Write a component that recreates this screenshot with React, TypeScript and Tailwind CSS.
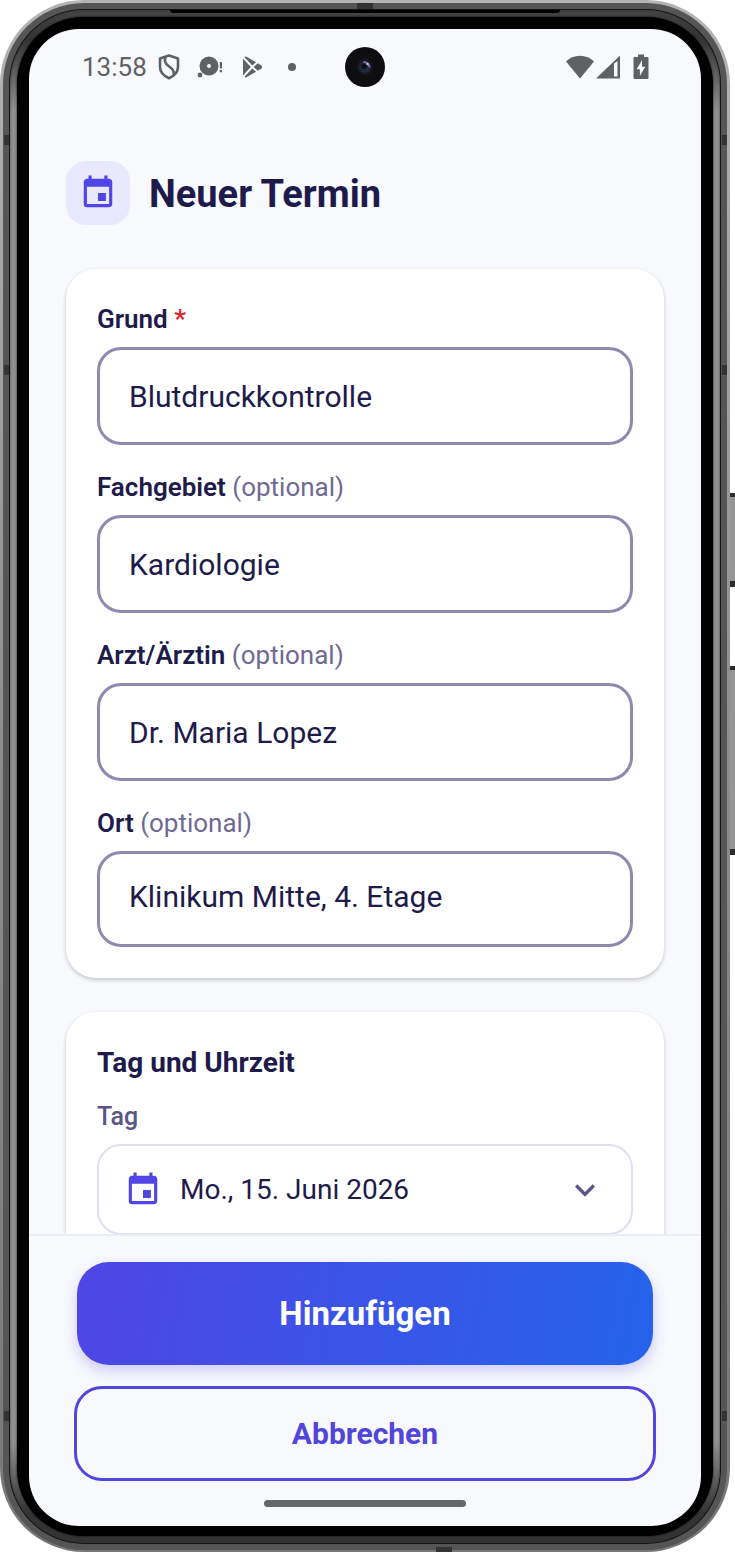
import { useState } from "react";
import { MdEvent, MdExpandMore } from "react-icons/md";

const initialFields = [
  { id: "reason", label: "Grund", required: true, value: "Blutdruckkontrolle" },
  { id: "specialty", label: "Fachgebiet", required: false, value: "Kardiologie" },
  { id: "doctor", label: "Arzt/Ärztin", required: false, value: "Dr. Maria Lopez" },
  { id: "place", label: "Ort", required: false, value: "Klinikum Mitte, 4. Etage" },
];

function StatusBar() {
  return (
    <div className="relative flex h-[76px] shrink-0 items-center justify-between pr-[52px] pl-[53px] text-[#5f6163]">
      <div className="flex items-center">
        <span className="text-[26px] leading-8">13:58</span>
        <svg className="ml-[11px] h-[26px] w-[22px]" viewBox="0 0 22 26" fill="none" stroke="currentColor" strokeWidth="2.6" strokeLinejoin="round">
          <path d="M11 1.6 20 4.6v8.2c0 5-3.6 9-9 11.4-5.4-2.400-9-6.400-9-11.400V4.600z" />
          <path d="M7.500 3.500c-1.500 3.500-.5 6 3 8.500s6 4.500 5 8.500" />
        </svg>
        <svg className="ml-[17px] h-[26px] w-[26px]" viewBox="0 0 26 26" fill="currentColor">
          <path fillRule="evenodd" d="M12 2.500a9.500 9.500 0 1 0 0 19 9.500 9.500 0 0 0 0-19zm0 7.500a2 2 0 1 1 0 4 2 2 0 0 1 0-4z" />
          <circle cx="3" cy="21" r="2.400" />
          <path d="M22.800 8h2.200v6.500h-2.200zM22.800 16h2.200v2.200h-2.200z" />
        </svg>
        <svg className="ml-[19px] h-[24px] w-[21px]" viewBox="0 0 21 24" fill="currentColor">
          <path d="M1 3.500 8.800 12 1 20.500z" />
          <path d="M2.500 2.200Q3 1 4.500 1.800L14 7.200 10.300 10.600z" />
          <path d="M2.500 21.800Q3 23 4.500 22.200L14 16.800 10.300 13.400z" />
          <path d="M11.600 12 15.800 8.200 19.300 10.400Q21 12 19.300 13.600L15.800 15.800z" />
        </svg>
        <span className="ml-[25px] size-2 rounded-full bg-current" />
      </div>
      <div className="absolute top-[18px] left-1/2 flex size-10 -translate-x-1/2 items-center justify-center rounded-full bg-[#0e0e10]">
        <svg className="size-5" viewBox="0 0 20 20">
          <circle cx="10" cy="10" r="8.500" fill="#16141c" />
          <circle cx="10" cy="10" r="6" fill="#262038" />
          <circle cx="9" cy="13" r="3" fill="#12323a" />
          <circle cx="9" cy="9.500" r="2.500" fill="#0b0a12" />
          <path d="M8.500 5a6 6 0 0 1 6 5.500" fill="none" stroke="#8468ac" strokeWidth="2" />
          <circle cx="12.500" cy="7" r="1.200" fill="#c9b8e6" />
        </svg>
      </div>
      <div className="flex items-center">
        <svg className="h-[26px] w-[28px]" viewBox="0 0 28 26" fill="currentColor">
          <path d="M14 24.500 0 7.500C3.800 4 8.500 1.800 14 1.800S24.200 4 28 7.500z" />
        </svg>
        <svg className="ml-[2px] h-[26px] w-[24px]" viewBox="0 0 24 26" fill="currentColor">
          <path fillRule="evenodd" d="M24 1.500v23H0zM18 9.500v13h3.500V7z" />
        </svg>
        <svg className="ml-[13px] h-[26px] w-[16px]" viewBox="0 0 16 26">
          <path d="M5 .5h6v2.500h3.500q1 0 1 1V24q0 1-1 1h-13q-1 0-1-1V4q0-1 1-1H5z" fill="currentColor" />
          <path d="M9 6 3.700 15.200h3.200V22l5.300-9.200H9z" fill="#f8f9fd" />
        </svg>
      </div>
    </div>
  );
}

function DeviceFrame({ children }: { children: React.ReactNode }) {
  return (
    <div className="relative h-screen overflow-hidden bg-white pr-[5px] pb-px font-[Roboto,sans-serif]">
      {/* side keys */}
      <span className="absolute top-[493px] right-0 h-[94px] w-[5px] border-t-4 border-b-[6px] border-[#2c2c2c] bg-[#959595]" />
      <span className="absolute top-[666px] right-0 h-[189px] w-[5px] border-t-4 border-b-[6px] border-[#2c2c2c] bg-[#959595]" />
      <div className="relative h-full rounded-[84px] bg-linear-to-b from-[#b4b4b4] via-[#8c8c8c] to-[#777777] p-[3px] pb-[2px]">
        <div className="h-full rounded-[81px] bg-[#555555] p-[6px]">
          <div className="h-full rounded-[75px] bg-[#141414] p-px">
            <div className="h-full rounded-[74px] bg-[linear-gradient(#444,#333_30px,#8f8f8f_100px,#8f8f8f_calc(100%-100px),#333_calc(100%-30px),#333)] p-[7px] shadow-[inset_0_0_2px_#333]">
              <div className="h-full rounded-[67px] bg-black p-[12px] pb-[10px] shadow-[0_0_2px_#000]">
                <div className="flex h-full flex-col overflow-hidden rounded-[50px] bg-[#f8f9fd]">
                  {children}
                </div>
              </div>
            </div>
          </div>
        </div>
        {/* antenna lines */}
        <span className="absolute top-[135px] left-[4px] h-[10px] w-[5px] bg-[#333333]" />
        <span className="absolute top-[365px] left-[4px] h-[10px] w-[5px] bg-[#333333]" />
        <span className="absolute top-[1411px] left-[4px] h-[10px] w-[5px] bg-[#333333]" />
        <span className="absolute top-[135px] right-[3px] h-[10px] w-[5px] bg-[#333333]" />
        <span className="absolute top-[365px] right-[3px] h-[10px] w-[5px] bg-[#333333]" />
        <span className="absolute top-[1411px] right-[3px] h-[10px] w-[5px] bg-[#333333]" />
        <span className="absolute bottom-0 left-[436px] h-[5px] w-[16px] bg-[#333333]" />
        <span className="absolute top-[3px] left-[357px] h-[6px] w-[16px] bg-[#333333]" />
        <span className="absolute top-[10px] right-[170px] left-[170px] h-[3px] rounded-b-lg bg-black" />
      </div>
    </div>
  );
}

function App() {
  const [fields, setFields] = useState(initialFields);
  const [day, setDay] = useState("2026-06-15");

  const updateField = (id: string, value: string) => {
    setFields(fields.map((f) => (f.id === id ? { ...f, value } : f)));
  };

  return (
    <DeviceFrame>
      <StatusBar />
      <form className="flex min-h-0 flex-1 flex-col" onSubmit={(e) => e.preventDefault()}>
        <main className="min-h-0 flex-1 overflow-y-auto px-[37px] pt-14 pb-8 [scrollbar-width:none]">
          <header className="flex items-center gap-[19px]">
            <div className="flex size-16 items-center justify-center rounded-[20px] bg-[#e8e9fc]">
              <MdEvent size={38} className="text-[#4f46e5]" />
            </div>
            <h1 className="pt-[2px] text-[38px] leading-[48px] font-bold text-[#1e1b4b]">
              Neuer Termin
            </h1>
          </header>

          <section className="mt-11 flex flex-col gap-[25px] rounded-[30px] bg-white px-[31px] pt-[33px] pb-[31px] shadow-[0_2px_4px_rgba(0,0,0,0.2)]">
            {fields.map((field) => (
              <div key={field.id} className="group">
                <label htmlFor={field.id} className="block text-[26px] leading-[34px] font-semibold text-[#1e1b4b]">
                  {field.label}{" "}
                  {field.required ? (
                    <span className="text-[#dc2626]">*</span>
                  ) : (
                    <span className="font-normal text-[#6e6a93]">(optional)</span>
                  )}
                </label>
                <input
                  id={field.id}
                  type="text"
                  value={field.value}
                  onChange={(e) => updateField(field.id, e.target.value)}
                  className="mt-[11px] block h-[98px] w-full rounded-[24px] border-3 border-[#8e8aae] bg-white px-[29px] text-[30px] text-[#1e1b4b] outline-none group-last:h-24 group-last:pb-[6px]"
                />
              </div>
            ))}
          </section>

          <section className="mt-[34px] rounded-[30px] bg-white px-[31px] pt-8 pb-[31px] shadow-[0_2px_4px_rgba(0,0,0,0.2)]">
            <h2 className="pt-px text-[28px] leading-9 font-bold text-[#1e1b4b]">Tag und Uhrzeit</h2>
            <label htmlFor="day" className="mt-5 block text-[25px] leading-8 font-medium text-[#5b5687]">
              Tag
            </label>
            <div className="mt-[11px] flex h-[91px] items-center rounded-[24px] border-2 border-[#e0def0] pr-[26px] pl-[25px]">
              <MdEvent size={38} className="shrink-0 text-[#4f46e5]" />
              <select
                id="day"
                value={day}
                onChange={(e) => setDay(e.target.value)}
                className="ml-[18px] min-w-0 flex-1 appearance-none bg-transparent text-[28px] text-[#1e1b4b] outline-none"
              >
                <option value="2026-06-15">Mo., 15. Juni 2026</option>
              </select>
              <MdExpandMore size={40} className="shrink-0 text-[#5b5687]" />
            </div>
          </section>
        </main>

        <footer className="flex flex-col border-t-2 border-[#ebecf5] px-[45px] pt-[26px] pb-[19px]">
          <button
            type="submit"
            className="mx-[3px] h-[103px] rounded-[32px] bg-[linear-gradient(100deg,#4f46e5,#2563eb)] text-[33px] font-bold text-white shadow-[0_6px_14px_rgba(79,70,229,0.25)]"
          >
            Hinzufügen
          </button>
          <button
            type="button"
            className="mt-[21px] h-[95px] rounded-[28px] border-3 border-[#5145dc] bg-[#f8f9fd] text-[30px] font-bold text-[#5145dc]"
          >
            Abbrechen
          </button>
          <div className="mt-[19px] h-[7px] w-[202px] self-center rounded-full bg-[#66676a]" />
        </footer>
      </form>
    </DeviceFrame>
  );
}

export default App;
